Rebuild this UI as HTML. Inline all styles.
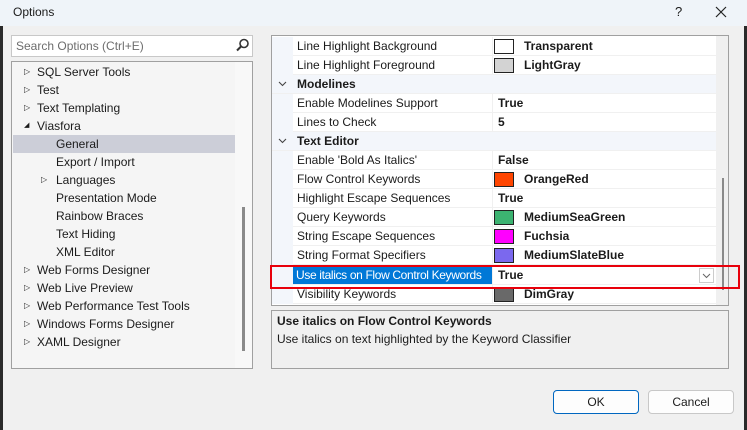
<!DOCTYPE html>
<html><head><style>
*{margin:0;padding:0;box-sizing:border-box}
body{width:747px;height:430px;background:#f0f0f0;font-family:"Liberation Sans",sans-serif;font-size:12px;color:#1b1b1b;position:relative;overflow:hidden}
.abs{position:absolute}
.title{left:0;top:0;width:747px;height:26px;background:#eff4f9}
.tree{left:11px;top:61px;width:242px;height:308px;border:1px solid #a0a0a0;background:#f5f5f5}
.ti{position:absolute;height:18px;line-height:18px;white-space:nowrap}
.arr{position:absolute;left:12px;font-size:8px}
.grid{left:271px;top:35px;width:458px;height:271px;border:1px solid #a0a0a0;background:#fff;overflow:hidden}
.row{position:absolute;left:0;width:444px;height:19px;line-height:18px;border-bottom:1px solid #f0f0f0}
.row .n{position:absolute;left:21px;width:200px;height:18px;padding-left:4px;border-right:1px solid #f0f0f0;background:#fff;white-space:nowrap;overflow:hidden}
.row .v{position:absolute;left:222px;font-weight:bold;padding-left:4px}
.row .g{position:absolute;left:0;width:21px;height:19px;background:#f3f6fb}
.sw{position:absolute;left:222px;top:2px;width:20px;height:15px;border:1px solid #222}
.row .vs{left:248px}
.cat{background:#f3f6fb}
.cat .c{position:absolute;left:25px;font-weight:bold}
.cat svg{position:absolute;left:6px;top:6px}
.btn{height:24px;width:86px;border:1px solid #c8c8c8;background:#fdfdfd;border-radius:4px;text-align:center;line-height:22px}
</style></head><body>
<div class="abs" style="left:0;top:0;width:3px;height:430px;background:#2a2a2a"></div>
<div class="abs" style="left:744px;top:0;width:3px;height:430px;background:#2a2a2a"></div>
<div class="abs title"></div>
<div class="abs" style="left:13px;top:5px;font-size:12px">Options</div>
<div class="abs" style="left:675px;top:4px;font-size:13px">?</div>
<svg class="abs" style="left:715px;top:6px" width="12" height="12"><path d="M1 1L11 11M11 1L1 11" stroke="#222" stroke-width="1.2"/></svg>

<div class="abs" style="left:11px;top:35px;width:242px;height:22px;border:1px solid #c8c8c8;background:#fff"></div>
<div class="abs" style="left:16px;top:39px;color:#6d6d6d">Search Options (Ctrl+E)</div>
<svg class="abs" style="left:236px;top:38px" width="14" height="14"><circle cx="8" cy="5.5" r="4" fill="none" stroke="#333" stroke-width="1.6"/><line x1="5" y1="8.5" x2="1" y2="12.5" stroke="#333" stroke-width="2"/></svg>

<div class="abs tree">
<div class="abs" style="left:223px;top:0;width:17px;height:306px;background:#f8f8f8"></div>
<div class="abs" style="left:230px;top:145px;width:3px;height:144px;background:#8a8a8a"></div>
<div class="abs" style="left:1px;top:73px;width:222px;height:18px;background:#ccced8"></div>
<div class="ti" style="top:1px;left:0"><span class="arr">▷</span><span style="position:absolute;left:25px">SQL Server Tools</span></div>
<div class="ti" style="top:19px;left:0"><span class="arr">▷</span><span style="position:absolute;left:25px">Test</span></div>
<div class="ti" style="top:37px;left:0"><span class="arr">▷</span><span style="position:absolute;left:25px">Text Templating</span></div>
<div class="ti" style="top:55px;left:0"><span class="arr" style="font-size:7px">◢</span><span style="position:absolute;left:25px">Viasfora</span></div>
<div class="ti" style="top:73px;left:44px">General</div>
<div class="ti" style="top:91px;left:44px">Export / Import</div>
<div class="ti" style="top:109px;left:19px"><span class="arr" style="left:10px">▷</span><span style="position:absolute;left:25px">Languages</span></div>
<div class="ti" style="top:127px;left:44px">Presentation Mode</div>
<div class="ti" style="top:145px;left:44px">Rainbow Braces</div>
<div class="ti" style="top:163px;left:44px">Text Hiding</div>
<div class="ti" style="top:181px;left:44px">XML Editor</div>
<div class="ti" style="top:199px;left:0"><span class="arr">▷</span><span style="position:absolute;left:25px">Web Forms Designer</span></div>
<div class="ti" style="top:217px;left:0"><span class="arr">▷</span><span style="position:absolute;left:25px">Web Live Preview</span></div>
<div class="ti" style="top:235px;left:0"><span class="arr">▷</span><span style="position:absolute;left:25px">Web Performance Test Tools</span></div>
<div class="ti" style="top:253px;left:0"><span class="arr">▷</span><span style="position:absolute;left:25px">Windows Forms Designer</span></div>
<div class="ti" style="top:271px;left:0"><span class="arr">▷</span><span style="position:absolute;left:25px">XAML Designer</span></div>
</div>

<div class="abs grid">
<div class="abs" style="left:444px;top:0;width:13px;height:278px;background:#f0f0f0"></div>
<div class="abs" style="left:450px;top:142px;width:2px;height:112px;background:#8a8a8a"></div>
<div class="row" style="top:1px"><span class="g"></span><span class="n">Line Highlight Background</span><span class="sw" style="background:#fff"></span><span class="v vs">Transparent</span></div>
<div class="row" style="top:20px"><span class="g"></span><span class="n">Line Highlight Foreground</span><span class="sw" style="background:#d3d3d3"></span><span class="v vs">LightGray</span></div>
<div class="row cat" style="top:39px"><svg width="9" height="6"><path d="M1 1L4.5 4.5L8 1" fill="none" stroke="#444" stroke-width="1.1"/></svg><span class="c">Modelines</span></div>
<div class="row" style="top:58px"><span class="g"></span><span class="n">Enable Modelines Support</span><span class="v">True</span></div>
<div class="row" style="top:77px"><span class="g"></span><span class="n">Lines to Check</span><span class="v">5</span></div>
<div class="row cat" style="top:96px"><svg width="9" height="6"><path d="M1 1L4.5 4.5L8 1" fill="none" stroke="#444" stroke-width="1.1"/></svg><span class="c">Text Editor</span></div>
<div class="row" style="top:115px"><span class="g"></span><span class="n">Enable 'Bold As Italics'</span><span class="v">False</span></div>
<div class="row" style="top:134px"><span class="g"></span><span class="n">Flow Control Keywords</span><span class="sw" style="background:#ff4500"></span><span class="v vs">OrangeRed</span></div>
<div class="row" style="top:153px"><span class="g"></span><span class="n">Highlight Escape Sequences</span><span class="v">True</span></div>
<div class="row" style="top:172px"><span class="g"></span><span class="n">Query Keywords</span><span class="sw" style="background:#3cb371"></span><span class="v vs">MediumSeaGreen</span></div>
<div class="row" style="top:191px"><span class="g"></span><span class="n">String Escape Sequences</span><span class="sw" style="background:#ff00ff"></span><span class="v vs">Fuchsia</span></div>
<div class="row" style="top:210px"><span class="g"></span><span class="n">String Format Specifiers</span><span class="sw" style="background:#7b68ee"></span><span class="v vs">MediumSlateBlue</span></div>
<div class="row" style="top:230px"><span class="g"></span><span class="n" style="background:#0078d7;color:#fff;letter-spacing:-0.35px;padding-left:3px">Use italics on Flow Control Keywords</span><span class="v">True</span><span class="abs" style="left:427px;top:2px;width:15px;height:15px;border:1px solid #ccc;background:#fff"><svg width="13" height="13" style="position:absolute;left:0;top:0"><path d="M3 5L6.5 8.5L10 5" fill="none" stroke="#666" stroke-width="1"/></svg></span></div>
<div class="row" style="top:249px"><span class="g"></span><span class="n">Visibility Keywords</span><span class="sw" style="background:#696969"></span><span class="v vs">DimGray</span></div>
</div>
<div class="abs" style="left:270px;top:265px;width:470px;height:24px;border:2px solid #e8000b"></div>

<div class="abs" style="left:271px;top:310px;width:458px;height:59px;border:1px solid #a0a0a0"></div>
<div class="abs" style="left:277px;top:314px;font-weight:bold">Use italics on Flow Control Keywords</div>
<div class="abs" style="left:277px;top:332px">Use italics on text highlighted by the Keyword Classifier</div>

<div class="abs btn" style="left:553px;top:390px;border-color:#0067c0">OK</div>
<div class="abs btn" style="left:648px;top:390px">Cancel</div>
</body></html>
